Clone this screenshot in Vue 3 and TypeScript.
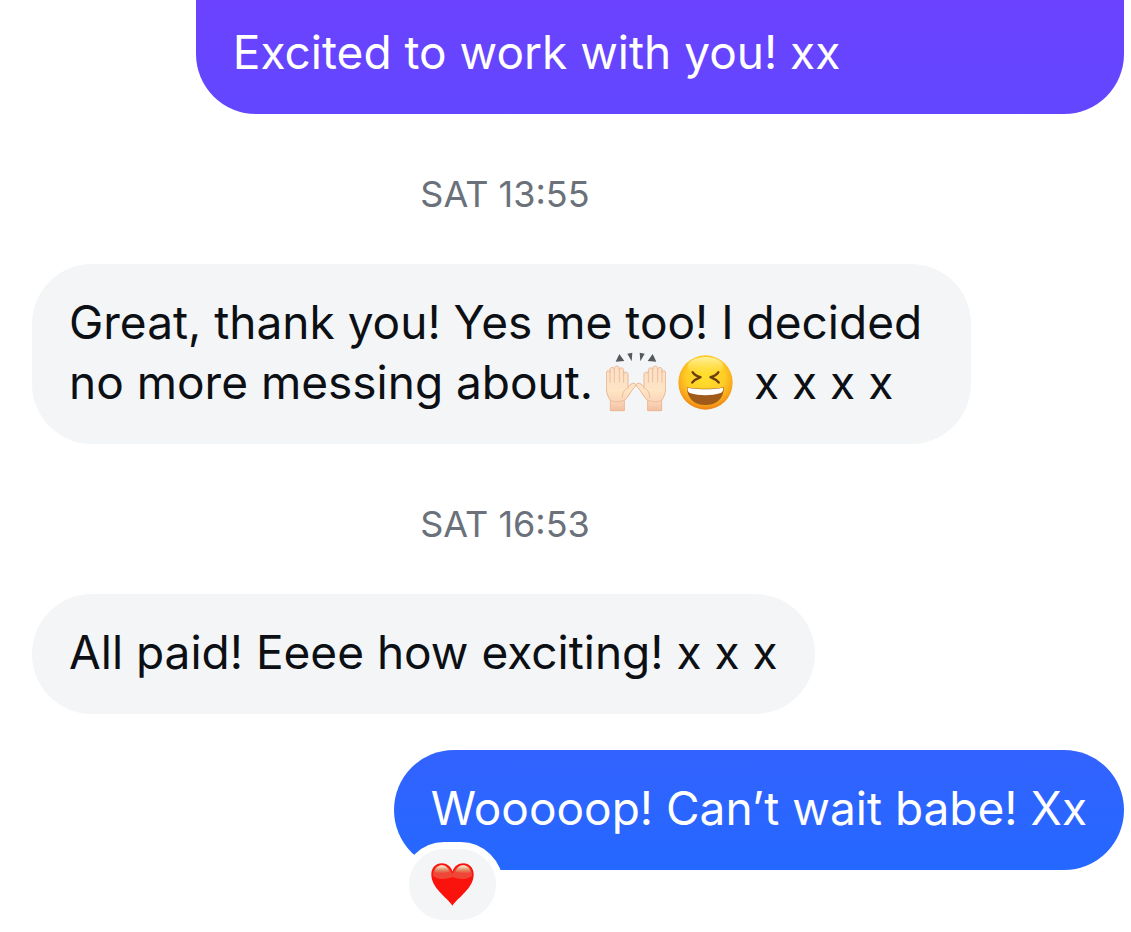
<script setup lang="ts">
interface TextMessage {
  id: number
  side: 'sent' | 'received'
  text: string
  tone?: 'violet' | 'blue'
  continued?: boolean
  emojis?: boolean
  tail?: string
  reaction?: boolean
}

interface Group {
  time?: string
  messages: TextMessage[]
}

const groups: Group[] = [
  {
    messages: [
      { id: 1, side: 'sent', tone: 'violet', continued: true, text: 'Excited to work with you! xx' },
    ],
  },
  {
    time: 'SAT 13:55',
    messages: [
      {
        id: 2,
        side: 'received',
        text: 'Great, thank you! Yes me too! I decided no more messing about.',
        emojis: true,
        tail: 'x x x x',
      },
    ],
  },
  {
    time: 'SAT 16:53',
    messages: [
      { id: 3, side: 'received', text: 'All paid! Eeee how exciting! x x x' },
      { id: 4, side: 'sent', tone: 'blue', text: 'Wooooop! Can’t wait babe! Xx', reaction: true },
    ],
  },
]
</script>

<template>
  <main class="thread">
    <section v-for="(group, i) in groups" :key="i" class="group">
      <time v-if="group.time" class="stamp">{{ group.time }}</time>
      <div
        v-for="m in group.messages"
        :key="m.id"
        class="bubble"
        :class="[m.side, m.tone, { continued: m.continued }]"
      >
        <p class="text">
          {{ m.text }}
          <template v-if="m.emojis">
            <span class="emojis">
              <svg class="emoji" viewBox="0 0 180 180" role="img" aria-label="Raising hands">
                <defs>
                  <linearGradient id="skin" x1="0" y1="0" x2="0" y2="1">
                    <stop offset="0" stop-color="#fbdfc8" />
                    <stop offset="0.55" stop-color="#fee5c4" />
                    <stop offset="0.8" stop-color="#fad5b8" />
                    <stop offset="1" stop-color="#f3bfa2" />
                  </linearGradient>
                  <g id="hand">
                    <path
                      d="M13 176V145C5 134 1 122 1 106V63C1 54 11 54 12 62V53C12 44 24 44 25 53V49C25 40 39 40 40 49V54C41 45 53 46 53 55V66C54 58 66 59 66 67V106C72 97 78 93 84 94C91 95 90 102 84 107C74 117 68 135 55 145V176Z"
                      fill="url(#skin)" stroke="#ebb692" stroke-width="3" stroke-linejoin="round"
                    />
                    <path
                      d="M12 62V91M25 53V90M40 49V90M53 62V92M49 137C49 119 57 110 67 108M15 146C28 151 42 151 54 145"
                      fill="none" stroke="#edbd9a" stroke-width="3" stroke-linecap="round"
                    />
                  </g>
                </defs>
                <use href="#hand" />
                <use href="#hand" transform="matrix(-1 0 0 1 180 0)" />
                <path d="M40 6L55 27L29 29Z M64 5L79 2L77 28Z M101 2L116 5L103 28Z M140 6L151 29L125 27Z" fill="#55595e" />
              </svg>
              <svg class="emoji face" viewBox="0 0 166 166" role="img" aria-label="Laughing face">
                <defs>
                  <radialGradient id="face" cx="0.5" cy="0.38" r="0.64">
                    <stop offset="0" stop-color="#ffe02e" />
                    <stop offset="0.55" stop-color="#ffcd25" />
                    <stop offset="0.82" stop-color="#f8a51b" />
                    <stop offset="1" stop-color="#ea7a12" />
                  </radialGradient>
                  <linearGradient id="shine" x1="0" y1="0" x2="0" y2="1">
                    <stop offset="0" stop-color="#fff6b0" stop-opacity="0.9" />
                    <stop offset="1" stop-color="#ffe94f" stop-opacity="0" />
                  </linearGradient>
                </defs>
                <circle cx="83" cy="83" r="82" fill="url(#face)" />
                <ellipse cx="83" cy="34" rx="54" ry="28" fill="url(#shine)" />
                <path d="M44 52C49 60 58 65 68 67C58 71 49 76 43 83M122 52C117 60 108 65 98 67C108 71 117 76 123 83" fill="none" stroke="#6a3f10" stroke-width="7" stroke-linecap="round" stroke-linejoin="round" />
                <path d="M27 97C61 103 104 103 138 97C139 132 115 151 83 151C50 151 27 131 27 97Z" fill="#a05a1a" />
                <path d="M29 99C62 105 104 105 136 99C137 107 134 113 129 115C98 124 66 124 36 115C31 113 28 107 29 99Z" fill="#fff" />
              </svg>
            </span>
          </template>
          {{ m.tail }}
        </p>
        <button v-if="m.reaction" class="reaction" type="button" aria-label="Heart reaction">
          <svg class="heart" viewBox="0 0 128 128" aria-hidden="true">
            <defs>
              <linearGradient id="gloss" x1="0" y1="0" x2="0" y2="1">
                <stop offset="0" stop-color="#fff0dc" />
                <stop offset="0.55" stop-color="#df9169" />
                <stop offset="1" stop-color="#ef4637" />
              </linearGradient>
            </defs>
            <path d="M64 127C47 101 1 75 1 34C1 13 15 1 32 1C47 1 59 10 64 25C69 10 81 1 96 1C113 1 127 13 127 34C127 75 81 101 64 127Z" fill="#fa120d" />
            <path d="M6 38C5 16 17 6 32 6C47 6 57 17 63 31L65 31C71 17 81 6 96 6C111 6 123 16 122 38C107 52 82 49 64 42C46 49 21 52 6 38Z" fill="#ef4637" />
            <path d="M10 28C12 14 22 7 33 7C44 7 51 16 55 25C43 31 25 33 10 28ZM118 28C116 14 106 7 95 7C84 7 77 16 73 25C85 31 103 33 118 28Z" fill="url(#gloss)" />
          </svg>
        </button>
      </div>
    </section>
  </main>
</template>

<style>
body {
  margin: 0;
  background: #fff;
}
</style>

<style scoped>
.thread {
  box-sizing: border-box;
  padding: 0 7px 62px 32px;
  font-family: Inter, "Liberation Sans", sans-serif;
  color: #0c1014;
}

.group {
  display: flex;
  flex-direction: column;
}

.stamp {
  align-self: center;
  margin: 58px 146px 48px 0;
  font-size: 36px;
  line-height: 44px;
  color: #6a717a;
}

.bubble {
  position: relative;
  box-sizing: border-box;
  width: fit-content;
  max-width: 86%;
  padding: 28px 37px 32px;
  border-radius: 60px;
}

.bubble + .bubble {
  margin-top: 36px;
}

.received {
  background: #f3f5f7;
}

.sent {
  align-self: flex-end;
  color: #fff;
}

.violet {
  background: linear-gradient(#6b42ff, #6247ff);
}

.blue {
  background: linear-gradient(#3362ff, #2468ff);
}

.continued {
  width: 85%;
  padding-top: 22px;
  border-radius: 0 0 60px 60px;
}

.text {
  margin: 0;
  font-size: 46px;
  line-height: 60px;
}

.emojis {
  display: inline-flex;
  gap: 12px;
  align-items: center;
  height: 60px;
  margin-right: 8px;
  vertical-align: bottom;
}

.emoji {
  width: 60px;
  height: 60px;
}

.emoji.face {
  width: 55px;
  height: 55px;
}

.reaction {
  position: absolute;
  left: 8px;
  bottom: -57px;
  display: flex;
  align-items: center;
  justify-content: center;
  width: 101px;
  height: 85px;
  padding: 0;
  border: 7px solid #fff;
  border-radius: 43px;
  background: #f3f5f7;
}

.heart {
  width: 43px;
  height: 43px;
}
</style>
